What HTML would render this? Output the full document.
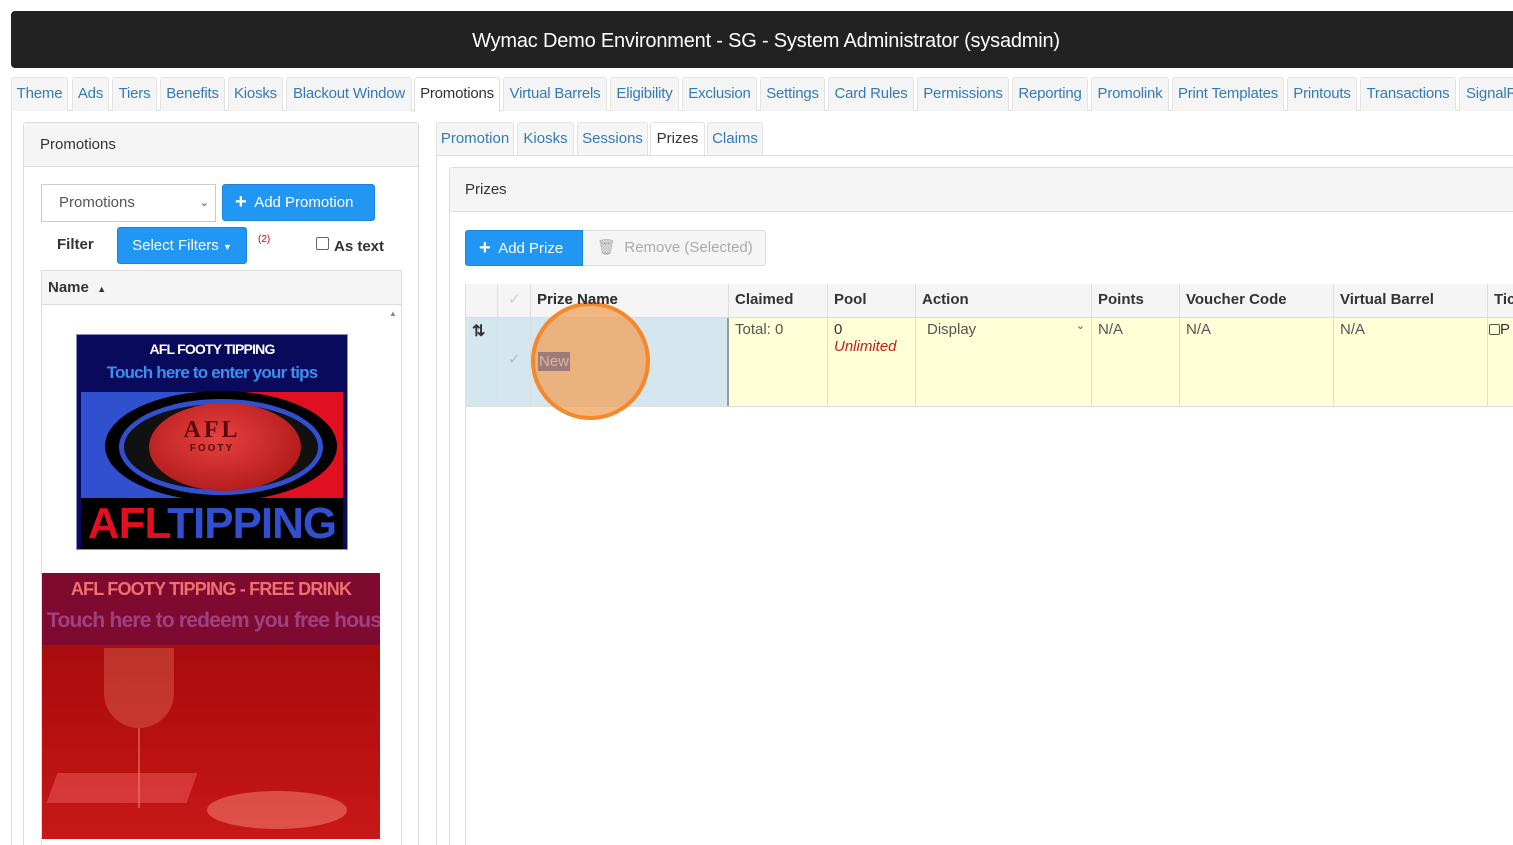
<!DOCTYPE html>
<html><head><meta charset="utf-8">
<style>
*{box-sizing:border-box;margin:0;padding:0}
html,body{width:1513px;height:845px;overflow:hidden}
body{background:#fff;font-family:"Liberation Sans",sans-serif;font-size:14px;color:#333;position:relative}
.a{position:absolute}
.hdr{left:11px;top:11px;width:1510px;height:57px;background:#222;border-radius:4px 0 0 4px;color:#fff;font-size:20px;line-height:60px;text-align:center;letter-spacing:-.2px}
.tab{position:absolute;top:77px;height:34px;background:#f5f5f5;border:1px solid #e3e3e3;border-bottom:none;border-radius:3px 3px 0 0;color:#337ab7;font-size:15px;line-height:32px;text-align:center;white-space:nowrap;letter-spacing:-.2px}
.tab.on{background:#fff;color:#333;border-color:#ddd;height:35px}
.stab{position:absolute;top:122px;height:34px;background:#f5f5f5;border:1px solid #e3e3e3;border-bottom:none;border-radius:3px 3px 0 0;color:#337ab7;font-size:15px;line-height:32px;text-align:center}
.stab.on{background:#fff;color:#333;height:35px}
.btn{position:absolute;background:#2196f3;color:#fff;font-size:15px;border-radius:3px;border:1px solid #1a85dd}
.th{position:absolute;top:284px;height:34px;background:#f5f5f5;border-right:1px solid #ddd;font-weight:bold;font-size:15px;line-height:32px;padding-left:6px;color:#333}
.td{position:absolute;top:318px;height:88px;background:#ffffd8;border-right:1px solid #ddd;font-size:15px;padding:3px 6px;color:#555}
</style></head><body>
<div class="a hdr">Wymac Demo Environment - SG - System Administrator (sysadmin)</div>

<div class="a" style="left:11px;top:110px;width:1502px;height:1px;background:#ddd"></div>
<div class="a" style="left:11px;top:110px;width:1px;height:735px;background:#ddd"></div>

<div class="tab" style="left:11px;width:57px">Theme</div>
<div class="tab" style="left:72px;width:37px">Ads</div>
<div class="tab" style="left:112px;width:45px">Tiers</div>
<div class="tab" style="left:160px;width:65px">Benefits</div>
<div class="tab" style="left:228px;width:55px">Kiosks</div>
<div class="tab" style="left:286px;width:126px">Blackout Window</div>
<div class="tab on" style="left:414px;width:86px">Promotions</div>
<div class="tab" style="left:503px;width:104px">Virtual Barrels</div>
<div class="tab" style="left:610px;width:69px">Eligibility</div>
<div class="tab" style="left:682px;width:75px">Exclusion</div>
<div class="tab" style="left:760px;width:65px">Settings</div>
<div class="tab" style="left:828px;width:86px">Card Rules</div>
<div class="tab" style="left:917px;width:92px">Permissions</div>
<div class="tab" style="left:1012px;width:76px">Reporting</div>
<div class="tab" style="left:1091px;width:78px">Promolink</div>
<div class="tab" style="left:1172px;width:112px">Print Templates</div>
<div class="tab" style="left:1287px;width:70px">Printouts</div>
<div class="tab" style="left:1360px;width:96px">Transactions</div>
<div class="tab" style="left:1459px;width:70px;text-align:left;padding-left:6px">SignalR</div>

<!-- left panel -->
<div class="a" style="left:23px;top:122px;width:396px;height:760px;border:1px solid #ddd;border-radius:3px"></div>
<div class="a" style="left:24px;top:123px;width:394px;height:44px;background:#f5f5f5;border-bottom:1px solid #ddd;padding-left:16px;line-height:44px;font-size:15px">Promotions</div>
<div class="a" style="left:41px;top:184px;width:175px;height:38px;border:1px solid #ccc;font-size:15px;color:#555;line-height:36px;padding-left:17px">Promotions<span style="position:absolute;right:6px;font-size:11px">&#8964;</span></div>
<div class="btn" style="left:222px;top:184px;width:153px;height:37px;line-height:35px;padding-left:12px"><b style="font-size:20px;vertical-align:-1px">+</b>&nbsp; Add Promotion</div>
<div class="a" style="left:57px;top:236px;font-weight:bold;font-size:15px">Filter</div>
<div class="btn" style="left:117px;top:227px;width:130px;height:37px;line-height:35px;text-align:center">Select Filters <span style="font-size:9px">▼</span></div>
<div class="a" style="left:258px;top:234px;font-size:10px;color:#c00">(2)</div>
<div class="a" style="left:316px;top:237px;width:13px;height:13px;border:1px solid #666;border-radius:2px"></div>
<div class="a" style="left:334px;top:238px;font-weight:bold;font-size:15px">As text</div>
<div class="a" style="left:41px;top:270px;width:361px;height:35px;background:#f5f5f5;border:1px solid #ddd;font-weight:bold;font-size:15px;line-height:33px;padding-left:6px">Name &nbsp;<span style="font-size:9px">▲</span></div>
<div class="a" style="left:41px;top:304px;width:361px;height:600px;border:1px solid #ddd;border-top:none"></div>
<div class="a" style="left:389px;top:309px;font-size:8px;color:#888">▲</div>

<!-- image 1 -->
<div class="a" style="left:76px;top:334px;width:272px;height:216px;background:#0a0a5c;overflow:hidden;border:1px solid #8890c0">
 <div class="a" style="left:0;top:6px;width:100%;text-align:center;color:#fff;font-weight:bold;font-size:14px;letter-spacing:-.8px">AFL FOOTY TIPPING</div>
 <div class="a" style="left:0;top:28px;width:100%;text-align:center;color:#3b8ff0;font-weight:bold;font-size:17px;letter-spacing:-.8px">Touch here to enter your tips</div>
 <div class="a" style="left:4px;top:57px;width:131px;height:106px;background:#3050d0"></div>
 <div class="a" style="left:135px;top:57px;width:131px;height:106px;background:#e01020"></div>
 <div class="a" style="left:28px;top:56px;width:232px;height:110px;border-radius:50%;background:#000"></div>
 <div class="a" style="left:42px;top:64px;width:204px;height:96px;border-radius:50%;border:5px solid #3050d0;background:#111"></div>
 <div class="a" style="left:72px;top:68px;width:152px;height:88px;border-radius:50%;background:radial-gradient(ellipse at 45% 40%,#e84040,#a01010)"></div>
 <div class="a" style="left:0;top:82px;width:100%;text-align:center;font-family:'Liberation Serif',serif;font-weight:bold;font-size:24px;color:#5a0a0a;letter-spacing:3px">AFL</div>
 <div class="a" style="left:0;top:108px;width:100%;text-align:center;font-weight:bold;font-size:10px;color:#5a0a0a;letter-spacing:2px">FOOTY</div>
 <div class="a" style="left:4px;top:163px;width:262px;height:53px;background:#000"></div>
 <div class="a" style="left:4px;top:167px;width:262px;text-align:center;font-weight:bold;font-size:44px;line-height:44px;letter-spacing:-1px"><span style="color:#e01020">AFL</span><span style="color:#3050d0">TIPPING</span></div>
</div>

<!-- image 2 -->
<div class="a" style="left:42px;top:573px;width:338px;height:266px;background:#7e0a30;overflow:hidden">
 <div class="a" style="left:0;top:6px;width:100%;text-align:center;color:#f07070;font-weight:bold;font-size:18px;letter-spacing:-.8px">AFL FOOTY TIPPING - FREE DRINK</div>
 <div class="a" style="left:5px;top:36px;white-space:nowrap;color:#a04080;font-weight:bold;font-size:21px;letter-spacing:-.8px">Touch here to redeem you free house drink</div>
 <div class="a" style="left:0;top:72px;width:338px;height:194px;background:linear-gradient(180deg,#a80c0c 0%,#b81010 50%,#c81818 100%)"></div>
 <div class="a" style="left:62px;top:75px;width:70px;height:80px;border-radius:0 0 35px 35px;background:rgba(255,170,140,.25)"></div>
 <div class="a" style="left:96px;top:155px;width:2px;height:80px;background:rgba(255,170,140,.4)"></div>
 <div class="a" style="left:10px;top:200px;width:140px;height:30px;background:rgba(255,120,120,.35);transform:skewX(-20deg)"></div>
 <div class="a" style="left:165px;top:218px;width:140px;height:38px;border-radius:50%;background:rgba(255,150,130,.45)"></div>
</div>

<!-- right side -->
<div class="stab" style="left:436px;width:78px">Promotion</div>
<div class="stab" style="left:517px;width:57px">Kiosks</div>
<div class="stab" style="left:577px;width:71px">Sessions</div>
<div class="stab on" style="left:650px;width:55px">Prizes</div>
<div class="stab" style="left:707px;width:56px">Claims</div>
<div class="a" style="left:436px;top:155px;width:1077px;height:1px;background:#ddd"></div>
<div class="a" style="left:436px;top:155px;width:1px;height:690px;background:#ddd"></div>

<div class="a" style="left:449px;top:167px;width:1070px;height:720px;border:1px solid #ddd;border-radius:3px"></div>
<div class="a" style="left:450px;top:168px;width:1063px;height:44px;background:#f5f5f5;border-bottom:1px solid #ddd;padding-left:15px;line-height:44px;font-size:15px">Prizes</div>

<div class="a" style="left:465px;top:230px;width:301px;height:36px;border:1px solid #ddd;border-radius:3px;background:#f5f5f5"></div>
<div class="btn" style="left:465px;top:230px;width:118px;height:36px;line-height:34px;padding-left:13px;border-radius:3px 0 0 3px"><b style="font-size:20px;vertical-align:-1px">+</b>&nbsp; Add Prize</div>
<div class="a" style="left:597px;top:238px;color:#aaa;font-size:15px">&#128465;&nbsp; Remove (Selected)</div>

<!-- grid -->
<div class="a" style="left:465px;top:284px;width:1050px;height:600px;border:1px solid #ddd"></div>
<div class="th" style="left:466px;width:32px"></div>
<div class="th" style="left:498px;width:33px;color:#ccc;font-weight:normal;padding-left:10px">✓</div>
<div class="th" style="left:531px;width:198px">Prize Name</div>
<div class="th" style="left:729px;width:99px">Claimed</div>
<div class="th" style="left:828px;width:88px">Pool</div>
<div class="th" style="left:916px;width:176px">Action</div>
<div class="th" style="left:1092px;width:88px">Points</div>
<div class="th" style="left:1180px;width:154px">Voucher Code</div>
<div class="th" style="left:1334px;width:154px">Virtual Barrel</div>
<div class="th" style="left:1488px;width:30px">Tic</div>
<div class="a" style="left:466px;top:317px;width:1047px;height:1px;background:#ddd"></div>

<div class="td" style="left:466px;width:32px;background:#d4e7ee;font-weight:bold;color:#333;font-size:16px">⇅</div>
<div class="td" style="left:498px;width:33px;background:#d4e7ee;color:#bbb;padding-top:32px;padding-left:10px">✓</div>
<div class="td" style="left:531px;width:198px;background:#d4e7ee;border-right:2px solid #999"></div>
<div class="td" style="left:729px;width:99px">Total: 0</div>
<div class="td" style="left:828px;width:88px;color:#333">0<br><i style="color:#c02020">Unlimited</i></div>
<div class="td" style="left:916px;width:176px;padding-left:11px">Display<span style="position:absolute;right:6px;top:1px;font-size:11px">&#8964;</span></div>
<div class="td" style="left:1092px;width:88px">N/A</div>
<div class="td" style="left:1180px;width:154px">N/A</div>
<div class="td" style="left:1334px;width:154px">N/A</div>
<div class="td" style="left:1488px;width:30px;padding-left:1px;color:#333"><span style="display:inline-block;width:11px;height:11px;border:1px solid #555;border-radius:2px;vertical-align:-1px"></span>P</div>
<div class="a" style="left:466px;top:406px;width:1047px;height:1px;background:#ddd"></div>

<div class="a" style="left:531px;top:302px;width:119px;height:118px;border-radius:50%;background:rgba(240,160,90,.75);border:4px solid #f5882a"></div>
<div class="a" style="left:538px;top:352px;background:#a07a78;color:#d8b8a0;font-size:15px;line-height:19px;padding:0 1px">New</div>
<div class="a" style="left:537px;top:291px;font-weight:bold;font-size:15px;color:#333">Prize Name</div>
</body></html>
